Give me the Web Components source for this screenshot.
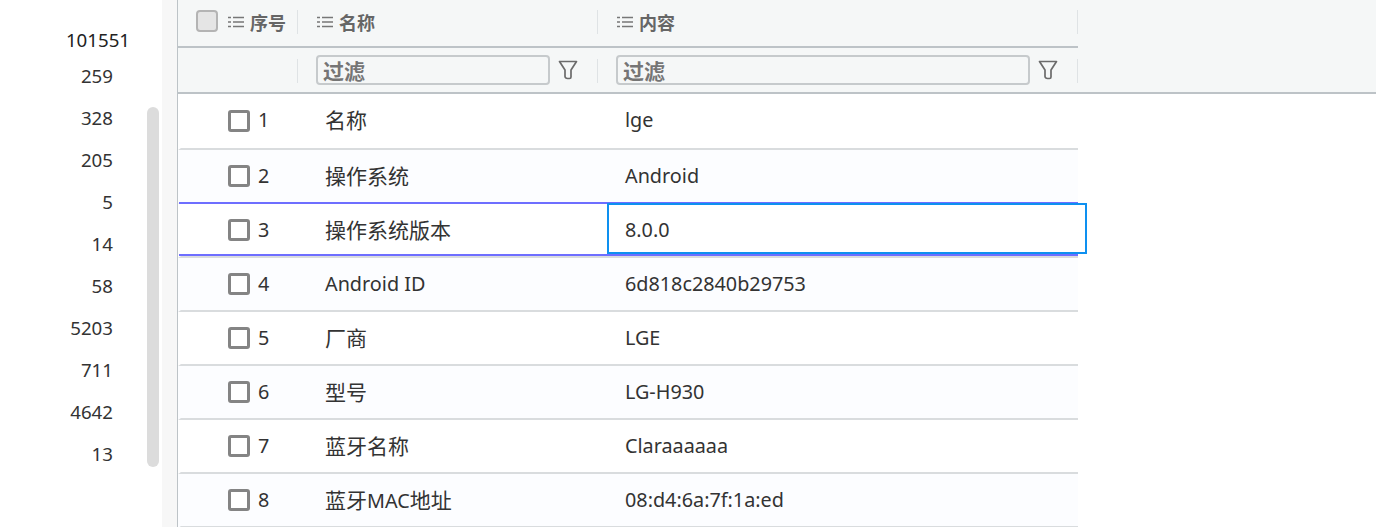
<!DOCTYPE html>
<html lang="zh">
<head>
<meta charset="utf-8">
<title>grid</title>
<style>
  html, body { margin: 0; height: 527px; overflow: hidden; background: #fff; }
  body { display: flex; font-family: "Noto Sans", "Noto Sans CJK SC", sans-serif; color: #333; }
</style>
</head>
<body>
<count-list></count-list>
<data-grid></data-grid>

<script>
const COUNTS = ['259', '328', '205', '5', '14', '58', '5203', '711', '4642', '13'];
const ROWS = [
  ['1', '名称', 'lge'],
  ['2', '操作系统', 'Android'],
  ['3', '操作系统版本', '8.0.0'],
  ['4', 'Android ID', '6d818c2840b29753'],
  ['5', '厂商', 'LGE'],
  ['6', '型号', 'LG-H930'],
  ['7', '蓝牙名称', 'Claraaaaaa'],
  ['8', '蓝牙MAC地址', '08:d4:6a:7f:1a:ed'],
];
const LIST_ICON = `<svg width="16" height="12" viewBox="0 0 16 12" fill="none" stroke="#777" stroke-width="1.5">
  <path d="M0 1.5h3M0 6h3M0 10.500h3"/><path d="M5 1.500h11M5 6h11M5 10.500h11"/></svg>`;

// the latin glyphs run narrower than the chinese ones in the reference font
function wrapCjk(text) {
  return text.replace(/[\u4e00-\u9fff]+/g, m => `<span class="cjk">${m}</span>`);
}

class CountList extends HTMLElement {
  constructor() {
    super();
    const shadowRoot = this.attachShadow({mode: 'open'});
    shadowRoot.innerHTML = this.getTemplate();
  }

  getTemplate() {
    return `
      <style>
        :host { display: flex; flex: none; width: 177px; height: 527px; background: #f7f7f7; font-size: 18.7px; color: #333; }
        .panel { position: relative; width: 162px; background: #fff; box-sizing: border-box; padding-top: 27px; }
        .total { width: 196px; text-align: center; line-height: 26px; height: 23px; color: #222; }
        ul { list-style: none; margin: 5px 0 0; padding: 0; width: 113px; text-align: right; }
        li { height: 42px; line-height: 42px; }
        .thumb { position: absolute; left: 147px; top: 107px; width: 12px; height: 360px; border-radius: 6px; background: #dcdcdc; }
      </style>
      <div class="panel">
        <div class="total">101551</div>
        <ul>${COUNTS.map(c => `<li>${c}</li>`).join('')}</ul>
        <div class="thumb"></div>
      </div>
    `;
  }
}

class GridHeader extends HTMLElement {
  constructor() {
    super();
    const shadowRoot = this.attachShadow({mode: 'open'});
    shadowRoot.innerHTML = this.getTemplate();
  }

  filterCell(width) {
    return `
      <div class="cell" style="width:${width}px">
        <div class="input" style="width:${width - 66}px">过滤</div>
        <svg class="funnel" width="20" height="20" viewBox="0 0 20 20" fill="none" stroke="#6b6b6b" stroke-width="1.7" stroke-linejoin="round">
          <path d="M1.500 1.500h17L13 10v7c0 1-.6 1.500-1.500 1.500h-2C8 18.500 7 17.500 7 16.500V10z"/>
        </svg>
        <i></i>
      </div>`;
  }

  getTemplate() {
    return `
      <style>
        :host { display: block; height: 94px; box-sizing: border-box; background: #f5f7f7; border-bottom: 2px solid #bdc3c7; color: #666; }
        .row { display: flex; width: 900px; }
        .titles { height: 48px; box-sizing: border-box; border-bottom: 2px solid #bdc3c7; }
        .filters { height: 44px; }
        .cell { position: relative; display: flex; align-items: center; box-sizing: border-box; padding-left: 18px; flex: none; }
        .titles .cell { font-size: 18px; font-weight: 700; padding-left: 19px; padding-bottom: 2px; }
        .titles svg { margin-right: 6px; flex: none; }
        .titles .first { padding-left: 18px; }
        .first svg { margin-left: 1px; }
        .box { width: 22px; height: 22px; box-sizing: border-box; border: 2px solid #b4b4b4; border-radius: 4px; background: #e5e5e5; margin: -2px 9px 0 0; flex: none; }
        i { position: absolute; right: 0; width: 1px; background: #dfe3e5; }
        .titles i { top: 10px; height: 24px; }
        .filters i { top: 11px; height: 24px; }
        .input { height: 30px; box-sizing: border-box; border: 2px solid #c6cacc; border-radius: 4px; padding-left: 5px; font-size: 21px; line-height: 29px; font-weight: 700; color: #757575; overflow: hidden; flex: none; }
        .funnel { margin-left: 8px; flex: none; }
      </style>
      <div class="row titles">
        <div class="cell first" style="width:120px"><span class="box"></span>${LIST_ICON}序号<i></i></div>
        <div class="cell" style="width:300px">${LIST_ICON}名称<i></i></div>
        <div class="cell" style="width:480px">${LIST_ICON}内容<i></i></div>
      </div>
      <div class="row filters">
        <div class="cell" style="width:120px"><i></i></div>
        ${this.filterCell(300)}
        ${this.filterCell(480)}
      </div>
    `;
  }
}

class GridRow extends HTMLElement {
  constructor() {
    super();
    const shadowRoot = this.attachShadow({mode: 'open'});
    shadowRoot.innerHTML = this.getTemplate();
  }

  getTemplate() {
    return `
      <style>
        :host { display: flex; position: relative; box-sizing: border-box; width: 900px; height: 54px; background: #fff; border-left: 3px solid transparent; border-bottom: 2px solid #d9dcde; font-size: 19.8px; color: #333; --lift: 2px; }
        :host([odd]) { background: #fcfdff; }
        :host([first]) { height: 56px; --lift: 4px; }
        .cell { display: flex; align-items: center; box-sizing: border-box; flex: none; white-space: nowrap; }
        .cell > div { margin-bottom: var(--lift); }
        .index { width: 117px; padding-left: 47px; }
        .name { width: 300px; padding-left: 27px; }
        .value { width: 480px; padding-left: 27px; }
        .box { width: 22px; height: 22px; box-sizing: border-box; border: 3px solid #848484; border-radius: 3px; background: #fff; margin-right: 8px; }
        .line { position: absolute; left: -2px; right: 0; height: 2px; background: #6e6eff; }
        .top { top: -2px; }
        .bottom { bottom: 0; }
        .focus { position: absolute; left: 426px; top: -1px; width: 480px; height: 51px; box-sizing: border-box; border: 2px solid #0e90f0; }
      </style>
      <div class="cell index"><span class="box"></span><div><slot name="index"></slot></div></div>
      <div class="cell name"><div><slot name="name"></slot></div></div>
      <div class="cell value"><div><slot name="value"></slot></div></div>
      ${this.hasAttribute('selected') ? '<div class="line top"></div><div class="line bottom"></div><div class="focus"></div>' : ''}
    `;
  }
}

class DataGrid extends HTMLElement {
  constructor() {
    super();
    const shadowRoot = this.attachShadow({mode: 'open'});
    shadowRoot.innerHTML = this.getTemplate();
  }

  getTemplate() {
    const rows = ROWS.map(([index, name, value], i) => `
      <grid-row ${i === 0 ? 'first' : ''} ${i % 2 ? 'odd' : ''} ${i === 2 ? 'selected' : ''}>
        <span slot="index">${index}</span><span slot="name">${wrapCjk(name)}</span><span slot="value">${value}</span>
      </grid-row>`).join('');
    return `
      <style>
        :host { display: block; flex: 1; min-width: 0; height: 527px; overflow: hidden; border-left: 1px solid #bdc3c7; background: #fff; }
        .cjk { font-size: 21px; }
      </style>
      <grid-header></grid-header>
      ${rows}
    `;
  }
}

window.customElements.define('count-list', CountList);
window.customElements.define('grid-header', GridHeader);
window.customElements.define('grid-row', GridRow);
window.customElements.define('data-grid', DataGrid);
</script>
</body>
</html>
